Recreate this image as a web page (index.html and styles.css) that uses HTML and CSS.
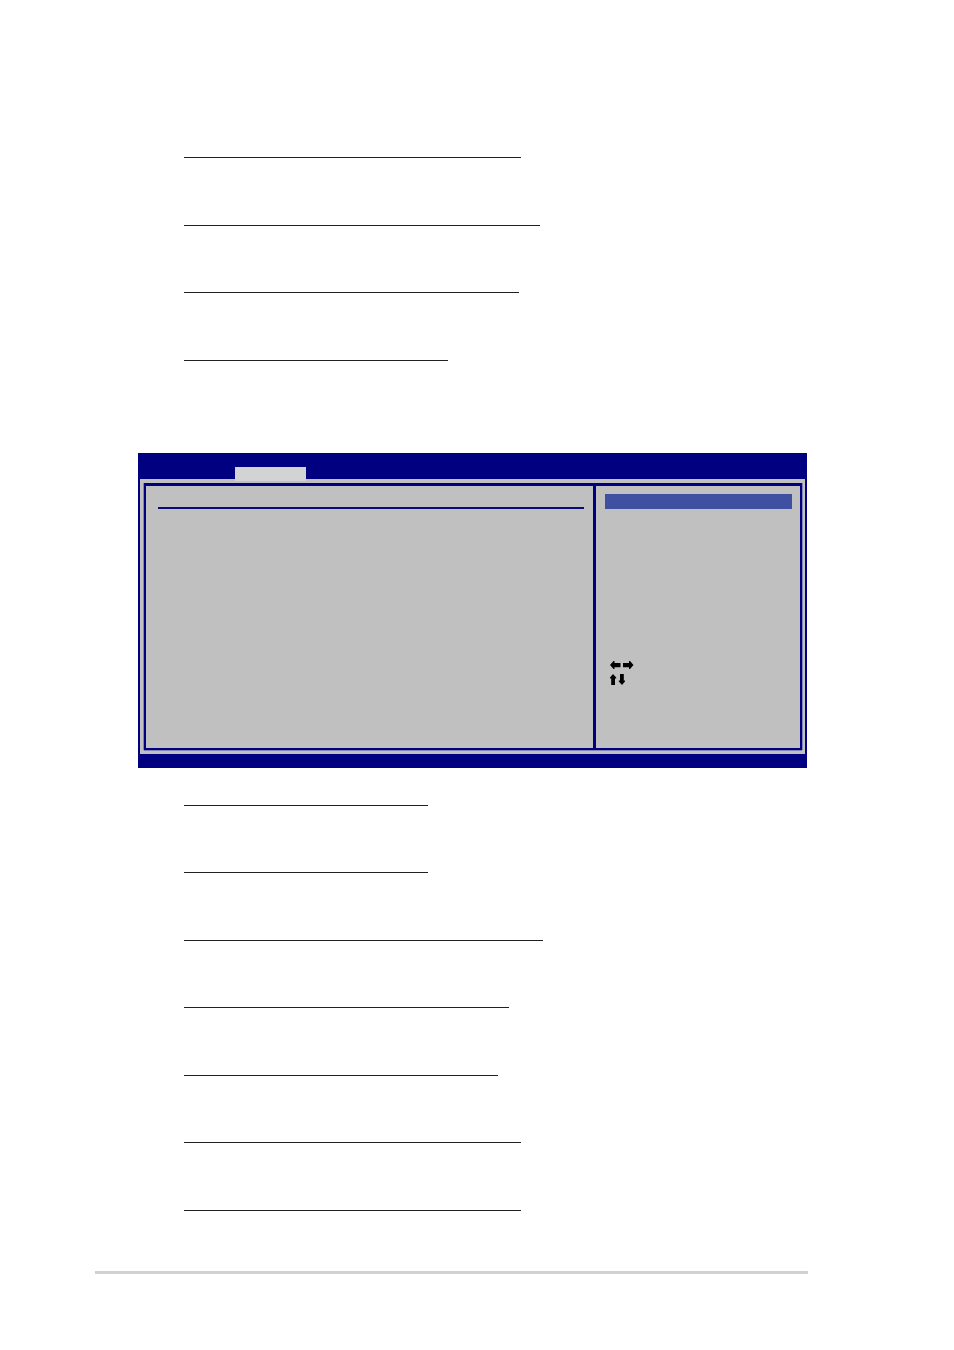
FILE: index.html
```
<!DOCTYPE html>
<html lang="en">
<head>
<meta charset="utf-8">
<meta name="viewport" content="width=device-width, initial-scale=1">
<title>Setup screen</title>
<link rel="stylesheet" href="styles.css">
</head>
<body>
<main class="page">
  <section class="rules rules-top">
    <hr class="rule w337">
    <hr class="rule w356">
    <hr class="rule w335">
    <hr class="rule w264">
  </section>

  <section class="bios">
    <header class="bios-menu"><div class="bios-tab"></div></header>
    <div class="bios-body">
      <div class="bios-frame">
        <div class="bios-main"><hr class="bios-line"></div>
        <aside class="bios-help">
          <div class="bios-select"></div>
          <svg class="keys" width="24" height="25" viewBox="0 0 24 25" aria-hidden="true">
            <path d="M0 4 3.5 0H4.5V2H10.5V6.2H4.5V8H3.5Z"/>
            <path d="M23.5 4 20 0H19V2H13V6.2H19V8H20Z"/>
            <path d="M3 13 6.2 16.5V17.5H5V24H1.2V17.5H0V16.5Z"/>
            <path d="M12 24 8.8 20.5V19.5H10V13H13.8V19.5H15V20.5Z"/>
          </svg>
        </aside>
      </div>
    </div>
    <footer class="bios-foot"></footer>
  </section>

  <section class="rules rules-bottom">
    <hr class="rule w244">
    <hr class="rule w244">
    <hr class="rule w359">
    <hr class="rule w325">
    <hr class="rule w314">
    <hr class="rule w337">
    <hr class="rule w337">
  </section>

  <hr class="page-end">
</main>
</body>
</html>
```
FILE: styles.css
```
* {
  box-sizing: border-box;
}

body {
  margin: 0;
  background: #fff;
  font-family: "Liberation Sans", Arial, sans-serif;
}

hr {
  margin: 0;
  border: 0;
}

.page {
  padding: 90px 146px 76px 95px;
}

/* Heading underlines */
.rules {
  display: grid;
  align-items: end;
  padding-left: 89px;
}

.rules-top {
  grid-auto-rows: 68px 68px 67px 68px;
}

.rules-bottom {
  grid-auto-rows: 68px 67px;
  margin-top: -30px;
}

.rule {
  width: 100%;
  height: 1px;
  background: #231f20;
}

.w244 { max-width: 244px; }
.w264 { max-width: 264px; }
.w314 { max-width: 314px; }
.w325 { max-width: 325px; }
.w335 { max-width: 335px; }
.w337 { max-width: 337px; }
.w356 { max-width: 356px; }
.w359 { max-width: 359px; }

/* Setup screen */
.bios {
  margin: 92px 1px 0 43px;
  background: #000080;
}

.bios-menu {
  height: 26px;
  padding: 14px 0 0 97px;
}

.bios-tab {
  position: relative;
  width: 71px;
  height: 14px;
  background: #d1d3d4;
}

.bios-body {
  margin: 0 2px;
  padding: 4px 3px 4px 4px;
  background: #c0c0c0;
}

.bios-frame {
  display: grid;
  grid-template-columns: minmax(0, 1fr) 207px;
  min-height: 267px;
  border: 2px solid #000080;
  border-top-width: 3px;
  box-shadow: -1px 0 #8585b5, 1px 0 #8585b5, 0 1px #8585b5;
}

.bios-main {
  padding: 21px 9px 0 12px;
}

.bios-line {
  height: 2px;
  background: #0c0c78;
}

.bios-help {
  display: flex;
  flex-direction: column;
  align-items: flex-start;
  gap: 152px;
  padding: 8px 8px 0 9px;
  border-left: 3px solid #000080;
}

.bios-select {
  width: 100%;
  height: 15px;
  background: #3f4fa1;
}

.keys {
  display: block;
  margin-left: 5px;
}

.bios-foot {
  height: 14px;
}

.page-end {
  height: 3px;
  margin-top: 60px;
  background: #d1d2d3;
}
```
